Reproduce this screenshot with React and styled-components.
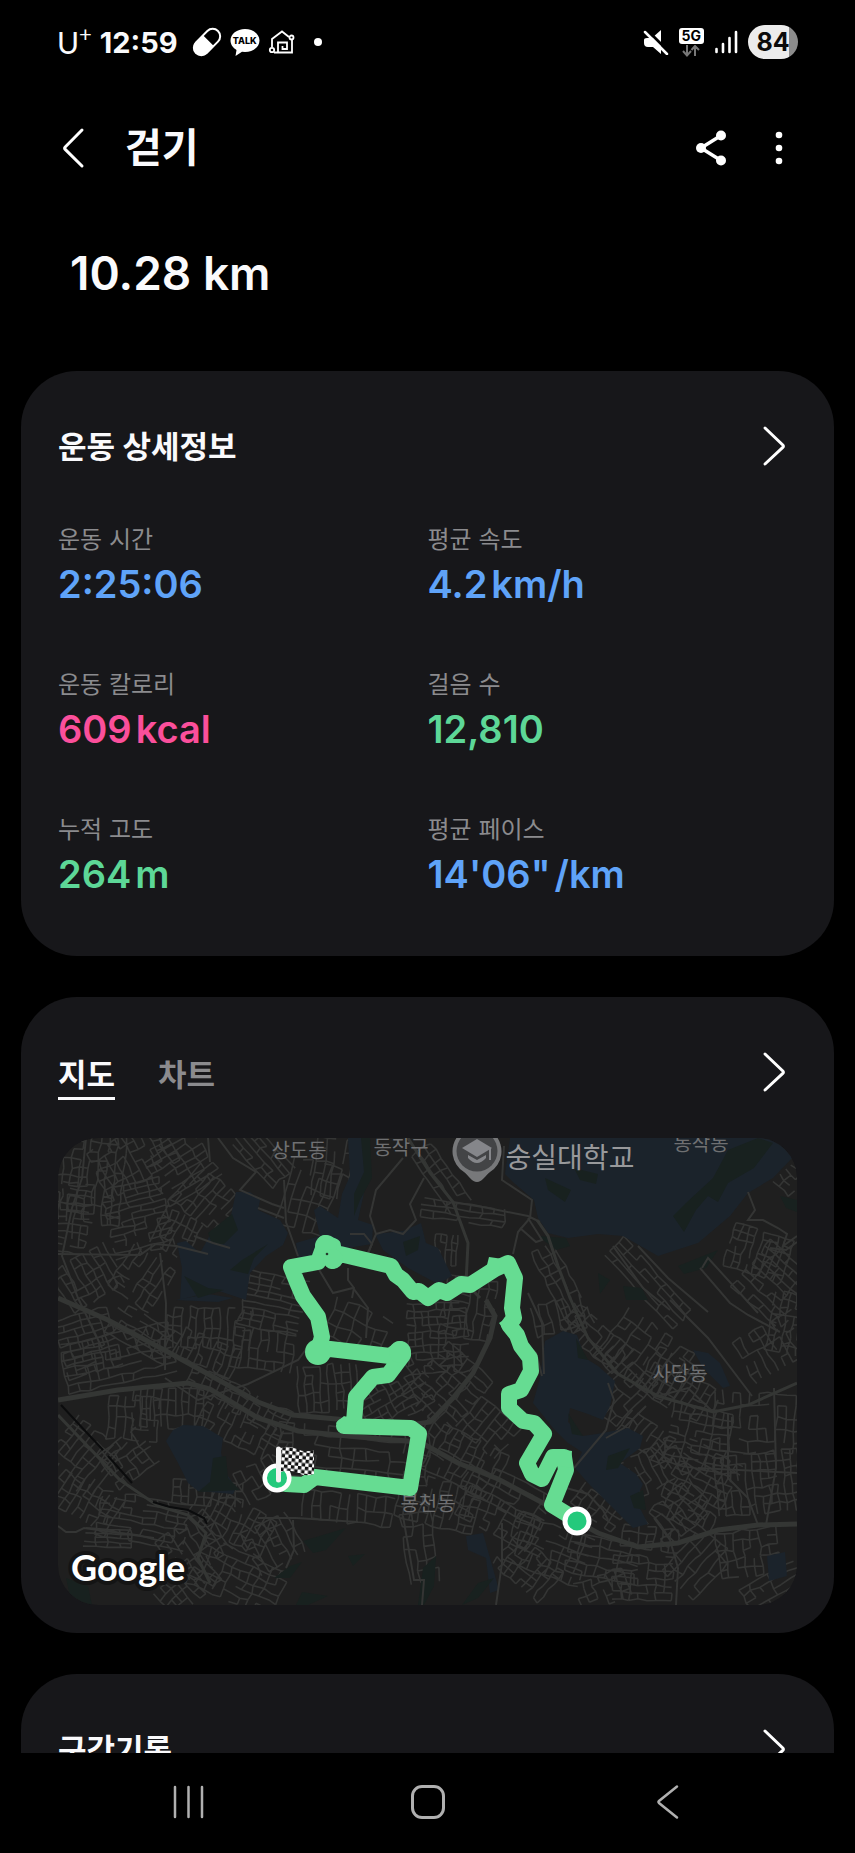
import React, { useState } from 'react';
import styled, { createGlobalStyle } from 'styled-components';

const COLORS = {
  page: '#000000',
  card: '#17171a',
  white: '#fafafc',
  muted: '#8b8b8e',
  nav: '#b0b0b0',
  blue: '#5fa3f8',
  pink: '#fb4f9b',
  green: '#5dd797',
  route: '#66dc92',
  marker: '#24c97c',
  land: '#1f1f1f',
  road: '#343534',
  mainRoad: '#343634',
  water: '#1b232b',
  park: '#18211f',
};

const STATS = [
  { label: '운동 시간', value: '2:25:06', color: COLORS.blue },
  { label: '평균 속도', value: '4.2', unit: 'km/h', color: COLORS.blue },
  { label: '운동 칼로리', value: '609', unit: 'kcal', color: COLORS.pink },
  { label: '걸음 수', value: '12,810', color: COLORS.green },
  { label: '누적 고도', value: '264', unit: 'm', color: COLORS.green },
  { label: '평균 페이스', value: '14\'06"', unit: '/km', color: COLORS.blue },
];

// x, y, width, height, angle, column gap, row gap
const DISTRICTS = [
  [30, 40, 70, 90, 6, 9, 9],
  [75, 20, 80, 50, -28, 8, 10],
  [122, 28, 60, 60, 58, 8, 11],
  [80, 80, 60, 70, -14, 12, 6],
  [150, 62, 60, 46, 40, 7, 13],
  [118, 95, 40, 40, 28, 7, 9],
  [16, 80, 30, 70, 8, 8, 7],
  [205, 18, 60, 30, 48, 13, 6],
  [250, 58, 48, 70, 17, 9, 15],
  [275, 30, 36, 60, 8, 9, 11],
  [30, 140, 60, 46, -30, 8, 9],
  [84, 140, 50, 50, 34, 8, 8],
  [215, 165, 60, 56, 12, 13, 6],
  [150, 190, 84, 40, 3, 8, 10],
  [85, 195, 70, 34, 30, 9, 8],
  [60, 220, 110, 50, -12, 11, 9],
  [150, 215, 60, 30, 22, 7, 9],
  [205, 212, 60, 40, 8, 9, 9],
  [110, 270, 70, 40, 2, 7, 12],
  [30, 205, 56, 60, -16, 9, 7],
  [180, 262, 110, 26, 27, 8, 9],
  [185, 292, 90, 34, 27, 8, 9],
  [75, 280, 50, 44, 4, 8, 10],
  [295, 316, 150, 52, 5, 13, 10],
  [270, 250, 60, 46, -4, 8, 10],
  [335, 258, 70, 50, -30, 8, 7],
  [300, 190, 60, 40, 24, 12, 12],
  [380, 200, 60, 70, -3, 8, 7],
  [410, 170, 50, 60, 10, 9, 9],
  [390, 250, 70, 60, -48, 8, 9],
  [25, 320, 60, 60, 38, 8, 10],
  [70, 320, 40, 50, 54, 8, 8],
  [30, 365, 60, 36, 30, 8, 10],
  [85, 382, 90, 46, 10, 12, 7],
  [150, 355, 70, 24, 4, 8, 8],
  [50, 400, 48, 18, 2, 11, 5],
  [135, 408, 60, 50, -34, 9, 9],
  [180, 385, 70, 40, 28, 7, 10],
  [215, 405, 50, 46, -28, 8, 9],
  [180, 440, 90, 50, 24, 9, 8],
  [130, 448, 60, 34, -42, 8, 9],
  [205, 340, 50, 34, -30, 9, 10],
  [290, 370, 90, 28, 6, 9, 13],
  [362, 410, 30, 70, -8, 10, 11],
  [400, 320, 90, 50, 27, 8, 9],
  [380, 365, 80, 46, 14, 8, 10],
  [450, 355, 90, 34, 27, 12, 8],
  [440, 380, 80, 34, 27, 9, 9],
  [430, 290, 50, 40, 40, 9, 9],
  [405, 75, 84, 18, 8, 12, 7],
  [383, 40, 24, 70, -35, 7, 10],
  [388, 112, 22, 30, 4, 6, 8],
  [505, 150, 24, 90, -28, 9, 9],
  [500, 178, 50, 30, -14, 8, 10],
  [590, 145, 100, 26, 48, 12, 7],
  [538, 200, 70, 30, 42, 8, 9],
  [590, 220, 90, 60, 36, 9, 10],
  [560, 250, 60, 50, -46, 10, 8],
  [620, 245, 70, 46, 30, 8, 9],
  [700, 115, 60, 44, 18, 8, 8],
  [715, 145, 60, 60, 42, 13, 8],
  [727, 185, 30, 60, 10, 8, 8],
  [712, 210, 60, 46, -30, 9, 9],
  [732, 42, 24, 20, -45, 8, 8],
  [700, 285, 90, 60, 3, 9, 11],
  [640, 300, 60, 60, 12, 9, 8],
  [590, 300, 60, 30, 36, 8, 9],
  [595, 330, 60, 40, -28, 8, 9],
  [640, 350, 80, 60, -62, 8, 8],
  [700, 345, 84, 60, -6, 8, 9],
  [620, 375, 60, 40, -40, 9, 9],
  [540, 370, 50, 24, 38, 8, 9],
  [592, 400, 56, 22, 8, 8, 8],
  [490, 412, 80, 50, 20, 9, 8],
  [470, 430, 60, 40, 40, 8, 8],
  [545, 420, 70, 40, 12, 10, 9],
  [585, 440, 60, 44, 2, 9, 8],
  [545, 452, 50, 30, -20, 8, 8],
  [640, 425, 60, 44, -48, 10, 9],
  [690, 415, 60, 46, -8, 9, 10],
  [715, 450, 60, 30, -28, 10, 8],
];

const MAIN_ROADS = [
  'M0 160 50 182 110 214 150 236 200 264 235 277 300 283 352 287 372 284 395 260 415 235 432 200 437 178 428 162',
  'M0 262 60 252 130 245 152 251 200 280 240 293 300 299 362 304 400 325 440 341 500 373 540 395 580 409 620 405 660 392 700 387 739 386',
];

const MID_ROADS = [
  'M0 277 62 342 100 368 130 377 148 395 140 420 152 445',
  'M350 0 372 35 395 64 410 105 408 145 422 160',
  'M479 82 490 98 500 128 512 160 530 200 560 236 600 258 655 274 690 267 739 245',
];

const SIDE_ROADS = [
  'M0 116 82 117 98 106 118 108 150 116',
  'M102 115 108 165 107 232',
  'M28 0 24 40 14 70 4 118 20 160 44 210',
  'M150 0 152 24',
  'M160 0 175 20 198 34 182 52 214 66 226 70',
  'M200 70 226 80',
  'M226 42 228 84 240 118',
  'M345 20 318 52 312 78 318 96 332 92 345 96 358 82 352 66 366 40',
  'M292 96 306 96 314 106 308 120',
  'M318 96 310 115',
  'M395 64 430 70 470 78 482 84',
  'M446 8 444 42 474 62 472 80 460 94 455 116',
  'M470 80 484 102 478 104 462 90',
  'M260 130 275 155 295 150 310 170 308 200',
  'M290 130 290 142 296 150 294 160',
  'M107 240 140 262 190 246 240 222 252 206',
  'M172 110 155 105 136 98',
  'M0 388 8 394 18 394 26 390 96 400',
  'M200 380 238 380 300 384',
  'M235 382 236 412 228 430',
  'M345 378 356 442 366 442 364 467',
  'M444 385 444 425 438 467',
  'M462 200 478 215 484 238',
  'M470 155 484 185 486 236',
  'M550 245 556 262 548 292 516 330',
  'M548 300 566 290 588 268',
  'M612 162 650 200 694 258',
  'M642 130 672 165 690 177 722 194',
  'M644 130 650 120 700 175',
  'M690 54 697 72 690 82 705 82 720 90 729 96 725 108 739 98',
  'M712 110 728 112 739 104',
  'M555 108 585 150 612 172',
  'M580 108 610 140 650 174',
  'M600 258 630 250 655 274 660 262',
  'M508 350 530 356 545 372 550 382',
  'M596 380 612 402 620 430 618 467',
  'M670 275 670 340 690 360 700 387',
  'M716 250 718 330 708 387',
  'M640 330 739 335',
];

const WATER = [
  'M119 105 128 103 142 115 152 97 172 82 178 54 192 54 202 62 200 72 222 82 230 95 225 107 208 118 192 135 188 162 158 152 122 162 124 130Z',
  'M290 0H307L309 30 306 55 300 82 315 87 314 106 290 110 240 122 238 105 262 98 256 72 262 68 280 80 284 56 292 38Z',
  'M317 96 345 93 363 85 368 105 380 110 394 138 380 146 350 130 325 112Z',
  'M452 0H739V15L715 40 690 55 672 78 640 105 600 118 565 98 540 96 510 100 490 95 480 80 476 62 456 45 447 36Z',
  'M487 203 505 193 519 197 527 220 540 228 557 243 552 268 545 282 530 276 512 270 510 284 525 298 545 295 570 290 585 298 582 310 562 325 578 336 585 346 578 362 590 386 575 390 560 375 545 360 530 345 517 330 524 314 510 305 495 290 475 265 482 240Z',
  'M635 212 650 215 662 225 672 248 665 250 645 230Z',
  'M709 418 727 414 729 438 711 443Z',
  'M408 398 425 395 432 420 441 452 432 455 428 420 410 412Z',
  'M108 303 115 292 125 287 145 288 165 300 163 315 168 335 178 350 175 356 140 353 130 345 120 325Z',
  'M118 162 150 156 175 160 160 164Z',
];

const PARKS = [
  'M150 95 174 76 180 92 166 106 154 106Z',
  'M184 122 210 106 196 120 190 136 172 132Z',
  'M126 138 150 150 166 152 140 160Z',
  'M303 0 312 0 314 40 302 62 296 78 296 56 306 34Z',
  'M345 104 362 98 360 112 348 118Z',
  'M487 40 513 52 507 64 490 52Z',
  'M516 30 540 36 538 46 522 42Z',
  'M615 78 628 65 655 40 670 12 700 0 715 5 696 30 670 45 660 64 650 58 638 72 626 94Z',
  'M480 98 508 100 512 108 498 112Z',
  'M620 128 660 112 648 130 626 136Z',
  'M540 135 552 142 542 156Z',
  'M565 148 584 150 590 162 568 162Z',
  'M722 58 739 62 739 74 728 70Z',
  'M518 200 530 222 520 220Z',
  'M510 275 525 298 514 296Z',
  'M550 318 572 310 560 330 548 332Z',
  'M572 358 585 352 588 372 576 370Z',
  'M155 320 168 318 170 340 182 352 140 354 152 344Z',
  'M245 403 288 390 268 412 255 415Z',
  'M290 418 307 416 295 428Z',
  'M232 428 244 424 232 440 216 440Z',
  'M244 454 270 458 250 467 238 467Z',
  'M8 440 30 448 34 467 14 467Z',
  'M365 430 378 418 376 448 366 467 360 467Z',
  'M404 467 420 445 436 440 420 460Z',
];

const RAILS = ['M3 267 45 312', 'M50 318 74 345', 'M95 364 112 369 130 372 146 380 149 386'];

const ROUTE =
  'M222 340 228 346 246 347 257 339 352 350 361 296 353 290 286 288 296 284 298 259 315 239 330 237 345 217 342 211 332 218 272 211 260 213 264 199 260 179 245 158 239 144 233 129 260 124 267 105 275 108 274 123 282 116 333 128 338 137 345 142 355 154 361 153 370 160 381 152 389 155 403 146 412 147 437 131 450 125 457 140 454 170 456 180 451 187 459 197 463 208 472 220 473 233 463 252 451 256 451 270 465 283 476 285 486 296 469 325 474 336 484 341 495 319 506 319 508 332 494 367 512 378';

// A jittered street grid, with a few blocks left open
const buildStreets = ([cx, cy, w, h, angle, gapX, gapY], index) => {
  let seed = index * 7919 + 17;
  const random = () => {
    seed = (seed * 16807) % 2147483647;
    return seed / 2147483647;
  };
  random();
  const turn = (angle * Math.PI) / 180;
  const cols = Math.round(w / gapX);
  const rows = Math.round(h / gapY);
  const nodes = [];
  for (let r = 0; r <= rows; r++) {
    nodes.push([]);
    for (let c = 0; c <= cols; c++) {
      const x = (c / cols - 0.5) * w + (random() - 0.5) * gapX * 0.3;
      const y = (r / rows - 0.5) * h + (random() - 0.5) * gapY * 0.3;
      nodes[r].push(
        [cx + x * Math.cos(turn) - y * Math.sin(turn), cy + x * Math.sin(turn) + y * Math.cos(turn)]
          .map((n) => n.toFixed(1))
          .join(' ')
      );
    }
  }
  let d = '';
  for (let r = 0; r <= rows; r++) {
    for (let c = 0; c <= cols; c++) {
      if (c < cols && random() < (gapX > gapY ? 0.85 : 0.6)) d += `M${nodes[r][c]}L${nodes[r][c + 1]}`;
      if (r < rows && random() < (gapX > gapY ? 0.6 : 0.85)) d += `M${nodes[r][c]}L${nodes[r + 1][c]}`;
    }
  }
  return d;
};

const STREETS = DISTRICTS.map(buildStreets).join('');

const RouteMap = () => (
  <MapDrawing viewBox="0 0 739 467" role="img" aria-label="걷기 경로 지도">
    <defs>
      <pattern id="checker" width="7" height="7" patternUnits="userSpaceOnUse" patternTransform="rotate(6)">
        <rect width="7" height="7" fill="#fff" />
        <path d="M0 0H3.5V7H7V3.5H0Z" fill="#111" />
      </pattern>
    </defs>
    <rect width="739" height="467" fill={COLORS.land} />
    <path d={STREETS} stroke={COLORS.road} strokeWidth="1.6" />
    <g fill={COLORS.water}>{WATER.map((d) => <path key={d} d={d} />)}</g>
    <g fill={COLORS.park}>{PARKS.map((d) => <path key={d} d={d} />)}</g>
    <g stroke={COLORS.road} strokeWidth="2">{SIDE_ROADS.map((d) => <path key={d} d={d} />)}</g>
    <g stroke={COLORS.mainRoad} strokeWidth="3">{MID_ROADS.map((d) => <path key={d} d={d} />)}</g>
    <g stroke={COLORS.mainRoad} strokeWidth="5">{MAIN_ROADS.map((d) => <path key={d} d={d} />)}</g>
    <g stroke="#0b0c0d" strokeWidth="2">{RAILS.map((d) => <path key={d} d={d} />)}</g>

    <path d="M419 44C414 44 411 38 406 34A24.500 24.500 0 1 1 432 34C427 38 424 44 419 44Z" fill="#77787a" />
    <circle cx="419" cy="13" r="20.500" fill="#434446" />
    <path d="M404 10 419 1 434 10 419 19Z" fill="#85868a" />
    <path d="M410 17 419 22 428 17V20Q419 30 410 20Z" fill="#85868a" />
    <path d="M432 10V22" stroke="#85868a" strokeWidth="2" />
    <Place x="241" y="20">상도동</Place>
    <Place x="343" y="17">동작구</Place>
    <Place x="643" y="13">동작동</Place>
    <Place x="622" y="243">사당동</Place>
    <Place x="370" y="373">봉천동</Place>
    <Place x="512" y="30" $large>숭실대학교</Place>

    <path d={ROUTE} stroke={COLORS.route} strokeWidth="16" strokeLinejoin="round" strokeLinecap="round" />
    <g fill={COLORS.route}>
      <circle cx="260" cy="214" r="13" />
      <circle cx="342" cy="214" r="11" />
      <circle cx="268" cy="108" r="11" />
      <circle cx="275" cy="121" r="10" />
      <path d="M278 285 286 278 300 284 296 292 284 292Z" />
      <path d="M431 119 445 121 440 134 428 131Z" />
      <path d="M441 185 450 179 460 190 452 200Z" />
      <path d="M502 311 514 313 513 330 502 328Z" />
    </g>
    <circle cx="269" cy="116" r="1.300" fill="#243a2c" />

    <circle cx="219" cy="340" r="12.300" fill={COLORS.marker} stroke="#fff" strokeWidth="4.500" />
    <path d="M223 310Q231 307 239 311T256 312V336Q248 339 240 335T223 334Z" fill="url(#checker)" />
    <path d="M220.500 311V342" stroke="#f4f4f4" strokeWidth="5" strokeLinecap="round" />
    <circle cx="519" cy="383" r="12" fill={COLORS.marker} stroke="#fff" strokeWidth="5" />
    <Logo x="13" y="443">Google</Logo>
  </MapDrawing>
);

const Chevron = ({ back }) => (
  <Icon width="24" height="42" viewBox="0 0 24 42" aria-hidden="true">
    <path
      d={back ? 'M21 3 4.200 20Q3 21.200 4.200 22.400L21 39' : 'M3 3 20.800 20Q22 21.200 20.800 22.400L3 39'}
      stroke="currentColor"
      strokeWidth="3"
      strokeLinecap="round"
    />
  </Icon>
);

const StatusIcons = () => (
  <>
    <Icon width="30" height="30" viewBox="0 0 30 30" aria-hidden="true">
      <g transform="rotate(45 15 15)">
        <rect x="7.500" y="-0.500" width="15" height="31" rx="7.500" stroke="#fff" strokeWidth="2" />
        <path d="M7 13H23V23A8 8 0 0 1 7 23Z" fill="#fff" />
      </g>
    </Icon>
    <Talk>
      <Icon width="30" height="30" viewBox="0 0 30 30" aria-hidden="true">
        <path d="M15 2C7 2 .5 7 .5 13.500C.5 17.500 3 20.800 6.500 23L5.500 29 12 24.800 15 25C23 25 29.500 20 29.500 13.500S23 2 15 2Z" fill="#fff" />
      </Icon>
      <TalkText>TALK</TalkText>
    </Talk>
    <Icon width="28" height="28" viewBox="0 0 28 28" stroke="#fff" strokeWidth="1.800" aria-hidden="true">
      <path d="M4 19V11L14 3.500 21 9M24 12V24.500H6" />
      <path d="M10 24V14.500H19V21H14.500V18" />
      <circle cx="23.500" cy="9.500" r="2" />
      <circle cx="4" cy="22" r="2.200" />
    </Icon>
  </>
);

const App = () => {
  const [tab, setTab] = useState('map');

  return (
    <Screen>
      <GlobalStyle />
      <StatusBar>
        <StatusGroup $tight>
          <Carrier>U<Plus>+</Plus></Carrier>
          <Clock>12:59</Clock>
          <StatusIcons />
          <MoreDot />
        </StatusGroup>
        <StatusGroup>
          <Icon width="26" height="26" viewBox="0 0 26 26" aria-hidden="true">
            <path d="M1 11Q1 9 4 9H9L18 1V25L10 18H5Q1 18 1 14Z" fill="#fff" />
            <path d="M2 -1 26 23" stroke="#000" strokeWidth="3" />
            <path d="M2 3 24 25" stroke="#fff" strokeWidth="2.500" strokeLinecap="round" />
          </Icon>
          <Network>
            <NetworkName>5G</NetworkName>
            <Icon width="20" height="12" viewBox="0 0 20 12" stroke="#777" strokeWidth="2" aria-hidden="true">
              <path d="M6 0V10M2 6 6 10.500 10 6M14 11V1M10.500 5 14 1 18 5" />
            </Icon>
          </Network>
          <Icon width="24" height="26" viewBox="0 0 24 26" stroke="#fff" strokeWidth="2.600" strokeLinecap="round" aria-hidden="true">
            <path d="M2.500 20V23M9 15V23M15.500 9V23M22 3V23" />
          </Icon>
          <Battery>84</Battery>
        </StatusGroup>
      </StatusBar>

      <Scroller>
        <Header>
          <IconButton aria-label="뒤로"><Chevron back /></IconButton>
          <Title>걷기</Title>
          <Actions>
            <IconButton aria-label="공유">
              <Icon width="36" height="36" viewBox="0 0 36 36" aria-hidden="true">
                <path d="M26 5.500 6 18 26 30.500" stroke="#fff" strokeWidth="3.500" />
                <g fill="#fff">
                  <circle cx="26" cy="5.500" r="5" />
                  <circle cx="6" cy="18" r="5" />
                  <circle cx="26" cy="30.500" r="5" />
                </g>
              </Icon>
            </IconButton>
            <IconButton aria-label="더보기">
              <Icon width="12" height="36" viewBox="0 0 12 36" aria-hidden="true">
                <g fill="#fff">
                  <circle cx="6" cy="5" r="3.300" />
                  <circle cx="6" cy="18" r="3.300" />
                  <circle cx="6" cy="31" r="3.300" />
                </g>
              </Icon>
            </IconButton>
          </Actions>
        </Header>
        <Distance>10.28 km</Distance>

        <Cards>
          <Card>
            <CardHeader>
              <CardTitle>운동 상세정보</CardTitle>
              <IconButton aria-label="운동 상세정보 열기"><Chevron /></IconButton>
            </CardHeader>
            <Stats>
              {STATS.map(({ label, value, unit, color }) => (
                <div key={label}>
                  <StatLabel>{label}</StatLabel>
                  <StatValue $color={color}>
                    {value}
                    {unit && <Unit>{unit}</Unit>}
                  </StatValue>
                </div>
              ))}
            </Stats>
          </Card>

          <Card $compact>
            <CardHeader>
              <Tabs role="tablist">
                <Tab role="tab" aria-selected={tab === 'map'} onClick={() => setTab('map')}>지도</Tab>
                <Tab role="tab" aria-selected={tab === 'chart'} onClick={() => setTab('chart')}>차트</Tab>
              </Tabs>
              <IconButton aria-label="지도 열기"><Chevron /></IconButton>
            </CardHeader>
            <RouteMap />
          </Card>

          <Card>
            <CardHeader>
              <CardTitle>구간기록</CardTitle>
              <IconButton aria-label="구간기록 열기"><Chevron /></IconButton>
            </CardHeader>
          </Card>
        </Cards>
      </Scroller>

      <NavBar>
        <NavButton aria-label="최근 앱">
          <Icon width="36" height="36" viewBox="0 0 36 36" stroke="currentColor" strokeWidth="2.500" strokeLinecap="round" aria-hidden="true">
            <path d="M4 3V33M17.500 3V33M31 3V33" />
          </Icon>
        </NavButton>
        <NavButton aria-label="홈">
          <Icon width="36" height="36" viewBox="0 0 36 36" aria-hidden="true">
            <rect x="2.500" y="2.500" width="31" height="31" rx="9.500" stroke="currentColor" strokeWidth="3" />
          </Icon>
        </NavButton>
        <NavButton aria-label="뒤로 가기">
          <Icon width="36" height="36" viewBox="0 0 36 36" aria-hidden="true">
            <path d="M28 2.500 10 17Q9 18 10 19L28 33.500" stroke="currentColor" strokeWidth="2.500" strokeLinecap="round" />
          </Icon>
        </NavButton>
      </NavBar>
    </Screen>
  );
};

const GlobalStyle = createGlobalStyle`
  *, *::before, *::after {
    box-sizing: border-box;
  }

  body {
    margin: 0;
    background: ${COLORS.page};
    color: ${COLORS.white};
    font-family: Inter, 'Noto Sans CJK KR', sans-serif;
  }
`;

const Screen = styled.div`
  display: flex;
  flex-direction: column;
  height: 100vh;
`;

const Icon = styled.svg`
  display: block;
  flex: none;
  fill: none;
`;

const StatusBar = styled.div`
  flex: none;
  display: flex;
  justify-content: space-between;
  align-items: center;
  height: 84px;
  padding: 0 57px;
`;

const StatusGroup = styled.div`
  display: flex;
  align-items: center;
  gap: ${(p) => (p.$tight ? '8px' : '10px')};
`;

const Carrier = styled.span`
  display: flex;
  font-family: Lato, sans-serif;
  font-size: 30px;
  font-weight: 400;
  line-height: 36px;
`;

const Plus = styled.span`
  font-size: 22px;
  line-height: 20px;
`;

const Clock = styled.span`
  margin-right: 6px;
  font-size: 29px;
  font-weight: 700;
`;

const Talk = styled.span`
  position: relative;
`;

const TalkText = styled.span`
  position: absolute;
  top: 7px;
  left: 0;
  right: 0;
  color: #000;
  font-size: 9px;
  font-weight: 800;
  line-height: 14px;
  text-align: center;
`;

const MoreDot = styled.span`
  width: 8px;
  height: 8px;
  margin-left: 10px;
  border-radius: 50%;
  background: #fff;
`;

const Network = styled.span`
  display: flex;
  flex-direction: column;
  align-items: center;
  gap: 1px;
`;

const NetworkName = styled.span`
  padding: 0 3px;
  border-radius: 3px;
  background: #fff;
  color: #000;
  font-size: 14px;
  font-weight: 700;
  line-height: 16px;
`;

const Battery = styled.span`
  width: 50px;
  height: 34px;
  border-radius: 17px;
  background: linear-gradient(to right, #ececec 82%, #8c8c8c 82%);
  color: #0b0b0b;
  font-size: 25px;
  font-weight: 700;
  line-height: 34px;
  text-align: center;
`;

const Scroller = styled.main`
  flex: 1;
  min-height: 0;
  overflow-y: auto;
  scrollbar-width: none;
`;

const Header = styled.header`
  display: flex;
  align-items: center;
  height: 128px;
  padding: 0 70px 0 61px;
`;

const Title = styled.h1`
  margin: 0 0 0 40px;
  font-size: 40px;
  font-weight: 700;
  line-height: 56px;
`;

const Actions = styled.div`
  display: flex;
  gap: 42px;
  margin-left: auto;
`;

const IconButton = styled.button`
  display: block;
  padding: 0;
  border: 0;
  background: none;
  color: #fff;
  cursor: pointer;
`;

const Distance = styled.p`
  margin: 0;
  padding: 33px 70px 70px;
  font-size: 46px;
  font-weight: 600;
  line-height: 56px;
`;

const Cards = styled.div`
  display: flex;
  flex-direction: column;
  gap: 41px;
  padding: 0 21px 41px;
`;

const Card = styled.section`
  padding: 40px 37px ${(p) => (p.$compact ? '28px' : '54px')};
  border-radius: 56px;
  background: ${COLORS.card};
`;

const CardHeader = styled.div`
  display: flex;
  justify-content: space-between;
  align-items: center;
  height: 70px;
  padding-right: 11px;
`;

const CardTitle = styled.h2`
  margin: 0;
  padding-top: 2px;
  font-size: 31px;
  font-weight: 700;
  line-height: 48px;
`;

const Stats = styled.dl`
  display: grid;
  grid-template-columns: 1fr 1fr;
  row-gap: 57px;
  margin: 43px 0 0;
`;

const StatLabel = styled.dt`
  color: ${COLORS.muted};
  font-size: 24px;
  line-height: 32px;
`;

const StatValue = styled.dd`
  margin: 0;
  color: ${(p) => p.$color};
  font-size: 38px;
  font-weight: 600;
  line-height: 56px;
`;

const Unit = styled.span`
  margin-left: 4px;
`;

const Tabs = styled.div`
  display: flex;
  gap: 43px;
`;

const Tab = styled.button`
  height: 56px;
  padding: 4px 0 0;
  border: 0;
  border-bottom: 3px solid transparent;
  background: none;
  color: ${COLORS.muted};
  font: inherit;
  font-size: 31px;
  font-weight: 700;
  cursor: pointer;

  &[aria-selected='true'] {
    border-color: ${COLORS.white};
    color: ${COLORS.white};
  }
`;

const MapDrawing = styled.svg`
  display: block;
  width: 100%;
  margin-top: 31px;
  border-radius: 40px;
  fill: none;
`;

const Place = styled.text`
  fill: ${(p) => (p.$large ? '#98999b' : '#6f7072')};
  font-size: ${(p) => (p.$large ? '28px' : '20px')};
  text-anchor: middle;
`;

const Logo = styled.text`
  fill: #fff;
  stroke: #141414;
  stroke-width: 8px;
  stroke-linejoin: round;
  paint-order: stroke;
  font-family: Lato, sans-serif;
  font-size: 36px;
  font-weight: 700;
`;

const NavBar = styled.nav`
  flex: none;
  display: flex;
  height: 100px;
  padding: 0 69px;
  background: ${COLORS.page};
`;

const NavButton = styled.button`
  flex: 1;
  display: flex;
  justify-content: center;
  align-items: center;
  padding: 0 0 3px;
  border: 0;
  background: none;
  color: ${COLORS.nav};
  cursor: pointer;
`;

export default App;
